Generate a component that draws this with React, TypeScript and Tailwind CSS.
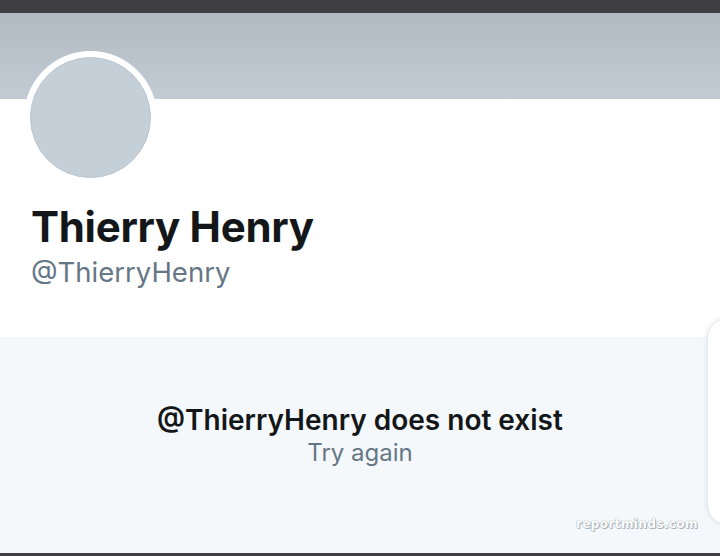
export default function App() {
  return (
    <div className="relative flex h-[556px] w-[720px] flex-col overflow-hidden bg-white font-['Inter','Liberation_Sans',sans-serif]">
      {/* status strip */}
      <div className="h-[13px] shrink-0 bg-[#3f3f42]" />

      {/* banner */}
      <div className="h-[86px] shrink-0 bg-gradient-to-b from-[#b1b9c2] to-[#c3ccd4]" />

      {/* profile header */}
      <div className="h-[238px] shrink-0 bg-white px-[24px]">
        <div className="-mt-[48px] h-[133px] w-[133px] rounded-full bg-white p-[6px]">
          <div className="h-full w-full rounded-full border border-[#bcc6cf] bg-[#c4cfd8]" />
        </div>
        <h1 className="mt-[18px] pl-[7px] text-[42px] font-bold leading-[50px] tracking-[-0.3px] text-[#14171a]">
          Thierry Henry
        </h1>
        <p className="mt-[4px] pl-[7px] text-[27.5px] leading-[32px] text-[#657786]">@ThierryHenry</p>
      </div>

      {/* empty state */}
      <div className="flex flex-1 flex-col items-center bg-[#f5f8fa] pt-[66px]">
        <p className="text-[28px] font-semibold leading-[34px] text-[#14171a]">@ThierryHenry does not exist</p>
        <p className="mt-[2px] text-[24px] leading-[28px] text-[#657786]">Try again</p>
      </div>

      <div className="h-[3px] shrink-0 bg-[#3f3f42]" />

      {/* side sheet peeking from the right */}
      <div className="absolute left-[707px] top-[318px] h-[207px] w-[40px] rounded-[22px] border border-[#e1e6ea] bg-white shadow-[0_0_6px_rgba(0,0,0,0.08)]" />

      {/* watermark */}
      <span className="absolute left-[576px] top-[515px] text-[12px] font-bold tracking-[0.4px] text-white [text-shadow:0_0_1px_#9aa0a6,0_0_1px_#9aa0a6,1px_1px_0_#b0b5ba] font-['DejaVu_Sans',sans-serif]">
        reportminds.com
      </span>
    </div>
  );
}
